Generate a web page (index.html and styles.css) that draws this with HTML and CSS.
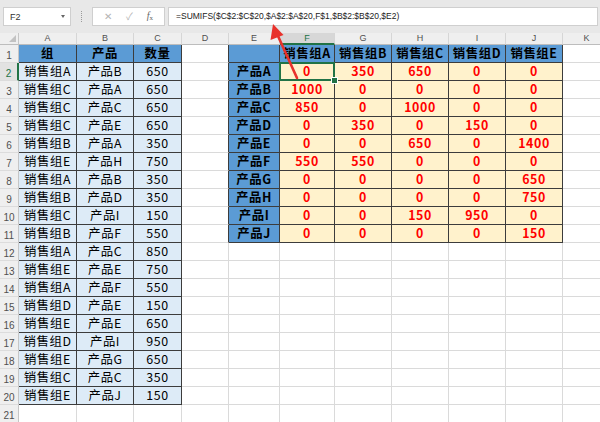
FILE: index.html
```html
<!DOCTYPE html>
<html lang="zh-CN">
<head>
<meta charset="utf-8">
<title>SUMIFS</title>
<link rel="stylesheet" href="styles.css">
</head>
<body>
<div class="app">
  <div class="fbar">
    <div class="namebox"><span>F2</span><span class="caret"></span></div>
    <div class="dots"></div>
    <div class="btns">
      <span class="btn x">✕</span>
      <span class="btn ok">✓</span>
      <span class="btn fx"><i>f</i><sub>x</sub></span>
    </div>
    <div class="formula">=SUMIFS($C$2:$C$20,$A$2:$A$20,F$1,$B$2:$B$20,$E2)</div>
  </div>

  <div class="sheet">
    <div class="corner"></div>
    <div class="ch">A</div><div class="ch">B</div><div class="ch">C</div><div class="ch">D</div><div class="ch">E</div><div class="ch cur">F</div><div class="ch">G</div><div class="ch">H</div><div class="ch">I</div><div class="ch">J</div><div class="ch">K</div>

    <div class="rh">1</div><div class="c h">组</div><div class="c h">产品</div><div class="c h">数量</div><div class="c dr"></div><div class="c h"></div><div class="c h">销售组A</div><div class="c h">销售组B</div><div class="c h">销售组C</div><div class="c h">销售组D</div><div class="c h">销售组E</div><div class="c"></div>

    <div class="rh cur">2</div><div class="c d">销售组A</div><div class="c d">产品B</div><div class="c d">650</div><div class="c dr"></div><div class="c h">产品A</div><div class="c v sel">0</div><div class="c v">350</div><div class="c v">650</div><div class="c v">0</div><div class="c v">0</div><div class="c"></div>

    <div class="rh">3</div><div class="c d">销售组C</div><div class="c d">产品A</div><div class="c d">650</div><div class="c dr"></div><div class="c h">产品B</div><div class="c v">1000</div><div class="c v">0</div><div class="c v">0</div><div class="c v">0</div><div class="c v">0</div><div class="c"></div>

    <div class="rh">4</div><div class="c d">销售组C</div><div class="c d">产品C</div><div class="c d">650</div><div class="c dr"></div><div class="c h">产品C</div><div class="c v">850</div><div class="c v">0</div><div class="c v">1000</div><div class="c v">0</div><div class="c v">0</div><div class="c"></div>

    <div class="rh">5</div><div class="c d">销售组C</div><div class="c d">产品E</div><div class="c d">650</div><div class="c dr"></div><div class="c h">产品D</div><div class="c v">0</div><div class="c v">350</div><div class="c v">0</div><div class="c v">150</div><div class="c v">0</div><div class="c"></div>

    <div class="rh">6</div><div class="c d">销售组B</div><div class="c d">产品A</div><div class="c d">350</div><div class="c dr"></div><div class="c h">产品E</div><div class="c v">0</div><div class="c v">0</div><div class="c v">650</div><div class="c v">0</div><div class="c v">1400</div><div class="c"></div>

    <div class="rh">7</div><div class="c d">销售组E</div><div class="c d">产品H</div><div class="c d">750</div><div class="c dr"></div><div class="c h">产品F</div><div class="c v">550</div><div class="c v">550</div><div class="c v">0</div><div class="c v">0</div><div class="c v">0</div><div class="c"></div>

    <div class="rh">8</div><div class="c d">销售组A</div><div class="c d">产品B</div><div class="c d">350</div><div class="c dr"></div><div class="c h">产品G</div><div class="c v">0</div><div class="c v">0</div><div class="c v">0</div><div class="c v">0</div><div class="c v">650</div><div class="c"></div>

    <div class="rh">9</div><div class="c d">销售组B</div><div class="c d">产品D</div><div class="c d">350</div><div class="c dr"></div><div class="c h">产品H</div><div class="c v">0</div><div class="c v">0</div><div class="c v">0</div><div class="c v">0</div><div class="c v">750</div><div class="c"></div>

    <div class="rh">10</div><div class="c d">销售组C</div><div class="c d">产品I</div><div class="c d">150</div><div class="c dr"></div><div class="c h">产品I</div><div class="c v">0</div><div class="c v">0</div><div class="c v">150</div><div class="c v">950</div><div class="c v">0</div><div class="c"></div>

    <div class="rh">11</div><div class="c d">销售组B</div><div class="c d">产品F</div><div class="c d">550</div><div class="c dr"></div><div class="c h">产品J</div><div class="c v">0</div><div class="c v">0</div><div class="c v">0</div><div class="c v">0</div><div class="c v">150</div><div class="c"></div>

    <div class="rh">12</div><div class="c d">销售组A</div><div class="c d">产品C</div><div class="c d">850</div><div class="c"></div><div class="c"></div><div class="c"></div><div class="c"></div><div class="c"></div><div class="c"></div><div class="c"></div><div class="c"></div>

    <div class="rh">13</div><div class="c d">销售组E</div><div class="c d">产品E</div><div class="c d">750</div><div class="c"></div><div class="c"></div><div class="c"></div><div class="c"></div><div class="c"></div><div class="c"></div><div class="c"></div><div class="c"></div>

    <div class="rh">14</div><div class="c d">销售组A</div><div class="c d">产品F</div><div class="c d">550</div><div class="c"></div><div class="c"></div><div class="c"></div><div class="c"></div><div class="c"></div><div class="c"></div><div class="c"></div><div class="c"></div>

    <div class="rh">15</div><div class="c d">销售组D</div><div class="c d">产品E</div><div class="c d">150</div><div class="c"></div><div class="c"></div><div class="c"></div><div class="c"></div><div class="c"></div><div class="c"></div><div class="c"></div><div class="c"></div>

    <div class="rh">16</div><div class="c d">销售组E</div><div class="c d">产品E</div><div class="c d">650</div><div class="c"></div><div class="c"></div><div class="c"></div><div class="c"></div><div class="c"></div><div class="c"></div><div class="c"></div><div class="c"></div>

    <div class="rh">17</div><div class="c d">销售组D</div><div class="c d">产品I</div><div class="c d">950</div><div class="c"></div><div class="c"></div><div class="c"></div><div class="c"></div><div class="c"></div><div class="c"></div><div class="c"></div><div class="c"></div>

    <div class="rh">18</div><div class="c d">销售组E</div><div class="c d">产品G</div><div class="c d">650</div><div class="c"></div><div class="c"></div><div class="c"></div><div class="c"></div><div class="c"></div><div class="c"></div><div class="c"></div><div class="c"></div>

    <div class="rh">19</div><div class="c d">销售组C</div><div class="c d">产品C</div><div class="c d">350</div><div class="c"></div><div class="c"></div><div class="c"></div><div class="c"></div><div class="c"></div><div class="c"></div><div class="c"></div><div class="c"></div>

    <div class="rh">20</div><div class="c d">销售组E</div><div class="c d">产品J</div><div class="c d">150</div><div class="c"></div><div class="c"></div><div class="c"></div><div class="c"></div><div class="c"></div><div class="c"></div><div class="c"></div><div class="c"></div>

    <div class="rh">21</div><div class="c"></div><div class="c"></div><div class="c"></div><div class="c"></div><div class="c"></div><div class="c"></div><div class="c"></div><div class="c"></div><div class="c"></div><div class="c"></div><div class="c"></div>
  </div>

  <svg class="arrow" width="600" height="422" viewBox="0 0 600 422">
    <line x1="297" y1="78" x2="278" y2="36" stroke="#e8322c" stroke-width="2.6" stroke-linecap="round"/>
    <polygon points="273,24 283.5,35 270.5,40" fill="#e8322c"/>
  </svg>
</div>
</body>
</html>
```

FILE: styles.css
```css
html, body {
  margin: 0;
  padding: 0;
  background: #ffffff;
}

.app {
  position: relative;
  width: 600px;
  height: 422px;
  overflow: hidden;
  font-family: "Noto Sans CJK SC", "Noto Sans", sans-serif;
}

/* formula bar */
.fbar {
  height: 33px;
  box-sizing: border-box;
  background: #e8e8e8;
  display: flex;
  align-items: flex-start;
  padding: 7px 2px 0 3px;
  font-family: "Liberation Sans", Arial, sans-serif;
}

.namebox {
  width: 68px;
  height: 19px;
  box-sizing: border-box;
  background: #ffffff;
  border: 1px solid #cfcfcf;
  display: flex;
  align-items: center;
  justify-content: space-between;
  padding: 0 5px 0 6px;
  font-size: 9px;
  color: #333;
}

.caret {
  width: 0;
  height: 0;
  border-left: 2.5px solid transparent;
  border-right: 2.5px solid transparent;
  border-top: 3px solid #666;
}

.dots {
  width: 0;
  height: 11px;
  margin: 4px 10px 0 10px;
  border-left: 1px dotted #9a9a9a;
}

.btns {
  width: 73px;
  height: 19px;
  box-sizing: border-box;
  background: #ffffff;
  border: 1px solid #cfcfcf;
  display: flex;
  align-items: center;
  justify-content: space-around;
  padding: 0 4px;
  margin-right: 3px;
}

.btn {
  font-size: 10px;
  color: #b4b4b4;
  line-height: 1;
}

.btn.fx {
  color: #666;
  font-family: "Liberation Serif", serif;
  font-size: 10px;
}

.btn.fx sub {
  font-size: 7px;
  vertical-align: -1px;
}

.formula {
  flex: 1;
  height: 19px;
  box-sizing: border-box;
  background: #ffffff;
  border: 1px solid #cfcfcf;
  padding: 0 0 0 7px;
  font-size: 8.5px;
  line-height: 17px;
  color: #222;
  white-space: nowrap;
}

/* grid */
.sheet {
  display: grid;
  grid-template-columns: 19px 58px 57px 48px 47px 51px 55px 57px 57px 57px 57px 48px;
  grid-template-rows: 12px repeat(21, 18px);
}

.corner {
  position: relative;
  background: #efefef;
  border-right: 1px solid #c6c6c6;
  border-bottom: 1px solid #bdbdbd;
}

.corner::after {
  content: "";
  position: absolute;
  right: 2px;
  bottom: 2px;
  width: 0;
  height: 0;
  border-left: 7px solid transparent;
  border-bottom: 7px solid #c2c2c2;
}

.ch {
  background: #efefef;
  border-right: 1px solid #d6d6d6;
  border-bottom: 1px solid #bdbdbd;
  font-family: "Liberation Sans", Arial, sans-serif;
  font-size: 9px;
  line-height: 11px;
  color: #505050;
  text-align: center;
}

.ch.cur {
  background: #d7d7d7;
  color: #217346;
  border-bottom: 2px solid #217346;
}

.rh {
  background: #efefef;
  border-right: 1px solid #c6c6c6;
  border-bottom: 1px solid #dcdcdc;
  font-family: "Liberation Sans", Arial, sans-serif;
  font-size: 10px;
  color: #505050;
  display: flex;
  align-items: center;
  justify-content: center;
  padding-top: 3px;
  box-sizing: border-box;
}

.rh.cur {
  color: #217346;
  background: #e2e2e2;
  border-right: 2px solid #217346;
}

.c {
  border-right: 1px solid #dadada;
  border-bottom: 1px solid #dadada;
  display: flex;
  align-items: center;
  justify-content: center;
  font-size: 12.4px;
  letter-spacing: 0.6px;
  line-height: 17px;
  color: #000;
  white-space: nowrap;
}

.c.dr {
  border-right-color: #3c3c3c;
}

.c.h {
  background: #5b9bd5;
  font-weight: bold;
  border-color: #3c3c3c;
}

.c.d {
  background: #ddebf7;
  border-color: #3c3c3c;
}

.c.v {
  background: #fff2cc;
  color: #ff0000;
  font-weight: bold;
  border-color: #3c3c3c;
}

.c.sel {
  position: relative;
}

.c.sel::after {
  content: "";
  position: absolute;
  left: -1px;
  top: -1px;
  right: -1px;
  bottom: -1px;
  border: 2px solid #217346;
}

.c.sel::before {
  content: "";
  position: absolute;
  right: -4px;
  bottom: -4px;
  width: 5px;
  height: 5px;
  background: #217346;
  border: 1px solid #ffffff;
  z-index: 2;
}

.arrow {
  position: absolute;
  left: 0;
  top: 0;
  pointer-events: none;
}
```
